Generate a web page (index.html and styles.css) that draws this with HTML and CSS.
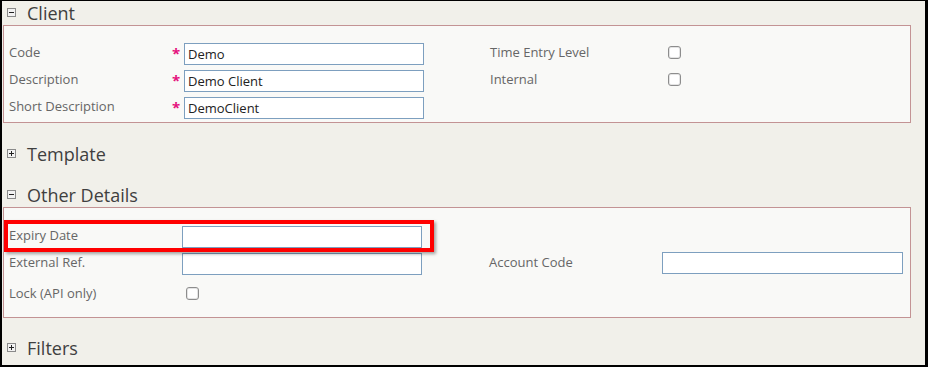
FILE: index.html
```html
<!DOCTYPE html>
<html>
<head>
<meta charset="utf-8">
<link rel="stylesheet" href="styles.css">
</head>
<body>
<div class="frame">
  <section class="sec">
    <div class="sec-head"><span class="tog minus"></span><span class="title">Client</span></div>
    <div class="panel panel-client">
      <div class="grid-client">
        <span class="lbl">Code</span><span class="req">*</span><input class="inp" value="Demo"><span></span><span class="lbl">Time Entry Level</span><span class="chk"></span>
        <span class="lbl">Description</span><span class="req">*</span><input class="inp" value="Demo Client"><span></span><span class="lbl">Internal</span><span class="chk"></span>
        <span class="lbl">Short Description</span><span class="req">*</span><input class="inp" value="DemoClient">
      </div>
    </div>
  </section>
  <section class="sec collapsed">
    <div class="sec-head"><span class="tog plus"></span><span class="title">Template</span></div>
  </section>
  <section class="sec">
    <div class="sec-head"><span class="tog minus"></span><span class="title">Other Details</span></div>
    <div class="panel panel-other">
      <div class="grid-other">
        <span class="lbl">Expiry Date</span><input class="inp" value=""><span></span><span></span><span></span>
        <span class="lbl">External Ref.</span><input class="inp" value=""><span></span><span class="lbl">Account Code</span><input class="inp inp-acc" value="">
        <span class="lbl lock">Lock (API only)</span><span class="lock"><span class="chk chk-lock"></span></span>
      </div>
      <div class="highlight"></div>
    </div>
  </section>
  <section class="sec">
    <div class="sec-head"><span class="tog plus"></span><span class="title">Filters</span></div>
  </section>
</div>
</body>
</html>
```
FILE: styles.css
```css
html, body {
  margin: 0;
  padding: 0;
  background: #ffffff;
}
.frame {
  box-sizing: border-box;
  width: 928px;
  height: 367px;
  border-top: 1px solid #000;
  border-left: 2px solid #000;
  border-right: 3px solid #000;
  border-bottom: 2px solid #000;
  background: #f1f0ea;
  font-family: "Open Sans", "Liberation Sans", sans-serif;
  overflow: hidden;
}
.sec {
  margin-bottom: 18px;
}
.sec.collapsed {
  margin-bottom: 17px;
}
.sec:first-child {
  margin-bottom: 19px;
}
.sec-head {
  height: 24px;
  display: flex;
  align-items: center;
  padding-left: 5px;
}
.tog {
  position: relative;
  box-sizing: border-box;
  width: 9px;
  height: 9px;
  border: 1px solid #8a8a8a;
  background: #f2f2f2;
  margin-right: 11px;
  margin-top: -1px;
}
.tog::before {
  content: "";
  position: absolute;
  left: 1px;
  top: 3px;
  width: 5px;
  height: 1px;
  background: #222;
}
.tog.plus::after {
  content: "";
  position: absolute;
  left: 3px;
  top: 1px;
  width: 1px;
  height: 5px;
  background: #222;
}
.title {
  font-size: 18px;
  line-height: 24px;
  color: #3f3f3f;
  margin-top: -1px;
}
.panel {
  position: relative;
  box-sizing: border-box;
  width: 908px;
  margin-left: 1px;
  border: 1px solid #c39394;
  background: #f9f9f7;
}
.panel-client {
  padding: 17px 0 3px 5px;
}
.panel-other {
  padding: 18px 0 15px 5px;
}
.grid-client {
  display: grid;
  grid-template-columns: 163px 12px 240px 66px 178px 13px;
  grid-auto-rows: 22px;
  row-gap: 5px;
}
.grid-other {
  display: grid;
  grid-template-columns: 173px 240px 67px 173px 241px;
  grid-auto-rows: 22px;
  row-gap: 5px;
}
.lbl {
  font-size: 13px;
  line-height: 18px;
  color: #666;
  white-space: nowrap;
}
.req {
  color: #e5127d;
  font-size: 15px;
  font-weight: bold;
  line-height: 18px;
  padding-top: 1px;
}
.inp {
  box-sizing: border-box;
  width: 240px;
  height: 22px;
  margin: 0;
  border: 1px solid #7d9fbf;
  border-radius: 0;
  background: #fff;
  padding: 0 3px;
  font-family: "Open Sans", "Liberation Sans", sans-serif;
  font-size: 13px;
  color: #222;
  outline: none;
}
.inp-acc {
  width: 241px;
  margin-top: -1px;
}
.chk {
  display: block;
  box-sizing: border-box;
  width: 13px;
  height: 13px;
  margin-top: 3px;
  border: 1px solid #8d8d8d;
  border-radius: 3px;
  background: #fff;
  box-shadow: inset 0 0 0 1px #e4e4e4;
}
.lock {
  padding-top: 4px;
}
.chk-lock {
  margin-top: 3px;
  margin-left: 4px;
}
.highlight {
  position: absolute;
  left: 0;
  top: 12px;
  box-sizing: border-box;
  width: 430px;
  height: 32px;
  border: 4px solid #ff0000;
  box-shadow: 2px 2px 3px rgba(0, 0, 0, 0.35);
  pointer-events: none;
}
```
